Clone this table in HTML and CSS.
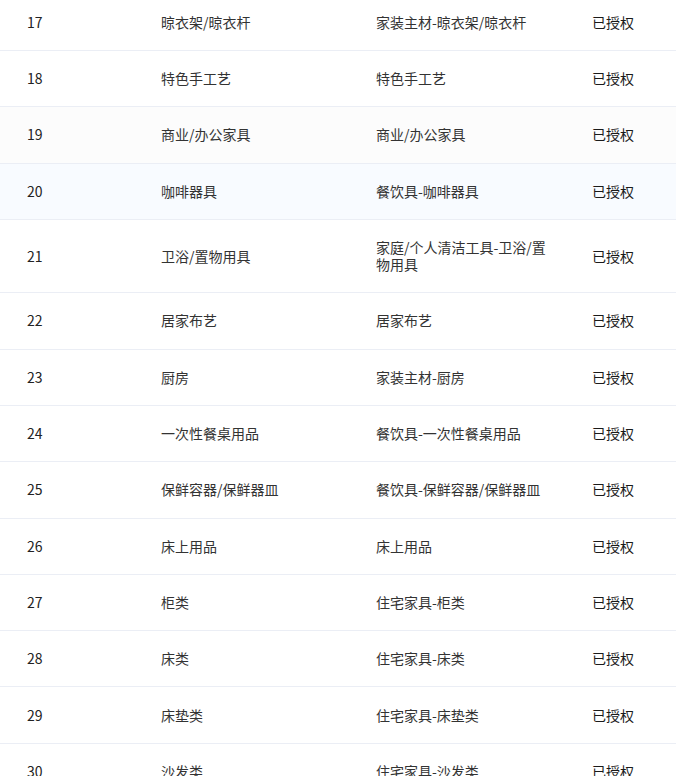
FILE: index.html
```html
<!DOCTYPE html>
<html lang="zh-CN">
<head>
<meta charset="utf-8">
<title>授权类目</title>
<link rel="stylesheet" href="styles.css">
</head>
<body>
<div class="wrap">
<table class="grid">
<colgroup>
<col class="c1"><col class="c2"><col class="c3"><col class="c4">
</colgroup>
<tbody>
<tr><td class="num">17</td><td>晾衣架/晾衣杆</td><td class="path">家装主材-晾衣架/晾衣杆</td><td class="st">已授权</td></tr>
<tr><td class="num">18</td><td>特色手工艺</td><td class="path">特色手工艺</td><td class="st">已授权</td></tr>
<tr class="stripe"><td class="num">19</td><td>商业/办公家具</td><td class="path">商业/办公家具</td><td class="st">已授权</td></tr>
<tr class="hover"><td class="num">20</td><td>咖啡器具</td><td class="path">餐饮具-咖啡器具</td><td class="st">已授权</td></tr>
<tr><td class="num">21</td><td>卫浴/置物用具</td><td class="path">家庭/个人清洁工具-卫浴/置物用具</td><td class="st">已授权</td></tr>
<tr><td class="num">22</td><td>居家布艺</td><td class="path">居家布艺</td><td class="st">已授权</td></tr>
<tr><td class="num">23</td><td>厨房</td><td class="path">家装主材-厨房</td><td class="st">已授权</td></tr>
<tr><td class="num">24</td><td>一次性餐桌用品</td><td class="path">餐饮具-一次性餐桌用品</td><td class="st">已授权</td></tr>
<tr><td class="num">25</td><td>保鲜容器/保鲜器皿</td><td class="path">餐饮具-保鲜容器/保鲜器皿</td><td class="st">已授权</td></tr>
<tr><td class="num">26</td><td>床上用品</td><td class="path">床上用品</td><td class="st">已授权</td></tr>
<tr><td class="num">27</td><td>柜类</td><td class="path">住宅家具-柜类</td><td class="st">已授权</td></tr>
<tr><td class="num">28</td><td>床类</td><td class="path">住宅家具-床类</td><td class="st">已授权</td></tr>
<tr><td class="num">29</td><td>床垫类</td><td class="path">住宅家具-床垫类</td><td class="st">已授权</td></tr>
<tr><td class="num">30</td><td>沙发类</td><td class="path">住宅家具-沙发类</td><td class="st">已授权</td></tr>
</tbody>
</table>
</div>
</body>
</html>
```
FILE: styles.css
```css
html, body {
  margin: 0;
  padding: 0;
  background: #ffffff;
  overflow: hidden;
}
body {
  font-family: "Noto Sans CJK SC", "Noto Sans", sans-serif;
  font-size: 14px;
  color: #333333;
}
.wrap {
  margin-top: -5.3px;
}
.grid {
  width: 676px;
  border-collapse: collapse;
  table-layout: fixed;
}
.c1 { width: 145px; }
.c2 { width: 215px; }
.c3 { width: 216px; }
.c4 { width: 100px; }
.grid td {
  padding: 19.17px 16px;
  line-height: 17px;
  border-bottom: 1px solid #ebeef5;
  vertical-align: middle;
  word-break: break-all;
}
.grid td.num {
  padding-left: 27px;
  color: #222222;
}
.grid td.path {
  padding-right: 25px;
}
.grid td.st {
  color: #1a1a1a;
  white-space: nowrap;
}
.stripe td { background: #fcfcfc; }
.hover td { background: #f8fbff; }
```
